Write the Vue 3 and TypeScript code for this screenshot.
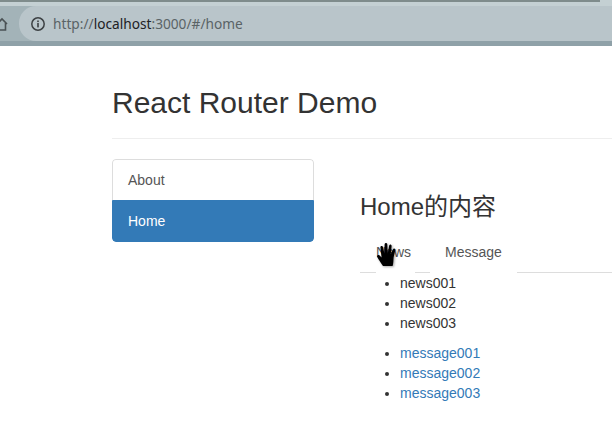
<template>
  <div class="browser-bar">
    <svg class="home-icon" viewBox="0 0 14 16" width="14" height="16">
      <path d="M-3 8 L2 3 L7 8 M5.5 7 V14 H-2" fill="none" stroke="#4a5154" stroke-width="1.6" />
    </svg>
    <div class="url-pill">
      <svg class="info-icon" viewBox="0 0 16 16" width="16" height="16">
        <circle cx="8" cy="8" r="6.2" fill="none" stroke="#3c4043" stroke-width="1.5" />
        <rect x="7.2" y="7" width="1.6" height="4.4" fill="#3c4043" />
        <rect x="7.2" y="4.5" width="1.6" height="1.6" fill="#3c4043" />
      </svg>
      <span class="url"><span class="dim">http://</span>localhost<span class="dim">:3000/#/home</span></span>
    </div>
  </div>

  <div class="page">
    <h2 class="title">React Router Demo</h2>
    <div class="columns">
      <div class="list-group">
        <a class="item">About</a>
        <a class="item active">Home</a>
      </div>
      <div class="panel">
        <h3 class="heading">Home的内容</h3>
        <div class="tabs">
          <a class="tab first">News</a>
          <a class="tab second">Message</a>
          <svg class="hand" viewBox="0 0 22 26" width="22" height="26">
            <path d="M7 25 C5 22 2.5 18.5 1.2 16 C0.6 14.4 2.4 13.4 3.6 14.4 L5.6 16.4 L4.4 6.5 C4.3 4.6 6.6 4.4 7 6.2 L8.4 12.5 L8.6 3.4 C8.7 1.4 11.2 1.4 11.3 3.4 L11.7 12.5 L13.2 4.6 C13.6 2.8 15.8 3.2 15.6 5.2 L14.8 13 L16.9 8.4 C17.6 6.8 19.6 7.6 19.2 9.4 L17.6 16.5 C17.3 19.5 17.6 22 16.6 25 Z" fill="#000" />
          </svg>
        </div>
        <ul class="news">
          <li v-for="n in news" :key="n">{{ n }}</li>
        </ul>
        <ul class="messages">
          <li v-for="m in messages" :key="m"><a>{{ m }}</a></li>
        </ul>
      </div>
    </div>
  </div>
</template>

<script setup lang="ts">
const news: string[] = ['news001', 'news002', 'news003']
const messages: string[] = ['message001', 'message002', 'message003']
</script>

<style>
html, body {
  margin: 0;
  background: #fff;
  overflow: hidden;
}
</style>

<style scoped>
.browser-bar {
  height: 46px;
  box-sizing: border-box;
  padding-top: 6px;
  display: flex;
  align-items: flex-start;
  background:
    linear-gradient(to right, #7f8c8c 600px, #c4d0d3 600px) top / 100% 2px no-repeat,
    linear-gradient(#c4d0d3 0, #c4d0d3 6px, #a3b3b8 6px, #a3b3b8 41px, #8fa1a8 41px);
}

.home-icon {
  margin: 10px 5px 0 0;
  flex-shrink: 0;
}

.url-pill {
  flex: 1;
  height: 35px;
  border-radius: 17px 0 0 17px;
  background: #b9c5ca;
  display: flex;
  align-items: center;
  padding-left: 11px;
  gap: 7px;
}

.url {
  font-family: "Noto Sans", "Roboto", sans-serif;
  font-size: 13.7px;
  color: #202124;
}

.dim {
  color: #5a6366;
}

.page {
  padding: 0 0 0 112px;
  font-family: "Liberation Sans", Arial, sans-serif;
  font-size: 14px;
  line-height: 20px;
  color: #333;
}

.title {
  margin: 0;
  padding: 39px 0 18px;
  height: 93px;
  box-sizing: border-box;
  border-bottom: 1px solid #eee;
  font-size: 30px;
  line-height: 36px;
  font-weight: 500;
}

.columns {
  display: flex;
  padding-top: 20px;
}

.list-group {
  width: 202px;
  flex-shrink: 0;
  margin-right: 46px;
  align-self: flex-start;
  box-sizing: border-box;
  border-radius: 4px;
  overflow: hidden;
}

.item {
  display: block;
  box-sizing: border-box;
  height: 41px;
  padding: 10px 15px;
  color: #555;
  background: #fff;
  border: 1px solid #ddd;
  border-bottom: none;
  border-radius: 4px 4px 0 0;
}

.item.active {
  height: 42px;
  color: #fff;
  background: #337ab7;
  border: 1px solid #337ab7;
  border-radius: 0 0 4px 4px;
}

.panel {
  flex: 1;
  padding-top: 31px;
}

.heading {
  margin: 0;
  font-family: "Liberation Sans", "Noto Sans CJK SC", sans-serif;
  font-size: 24px;
  line-height: 33px;
  font-weight: 400;
}

.tabs {
  position: relative;
  display: flex;
  height: 41px;
  margin-top: 9px;
  box-sizing: border-box;
  border-bottom: 1px solid #ddd;
}

.tab {
  height: 41px;
  box-sizing: border-box;
  padding: 10px 15px;
  color: #555;
  background: #fff;
  border-bottom: 1px solid #fff;
}

.tab.first {
  margin-left: 16px;
  padding: 10px 4px 10px 0;
}

.tab.second {
  margin-left: 15px;
}

.hand {
  position: absolute;
  left: 16px;
  top: 9px;
  filter: drop-shadow(1px 1px 1px rgba(0, 0, 0, 0.35));
}

ul {
  margin: 0 0 10px;
  padding-left: 40px;
}

.messages a {
  color: #337ab7;
}
</style>
